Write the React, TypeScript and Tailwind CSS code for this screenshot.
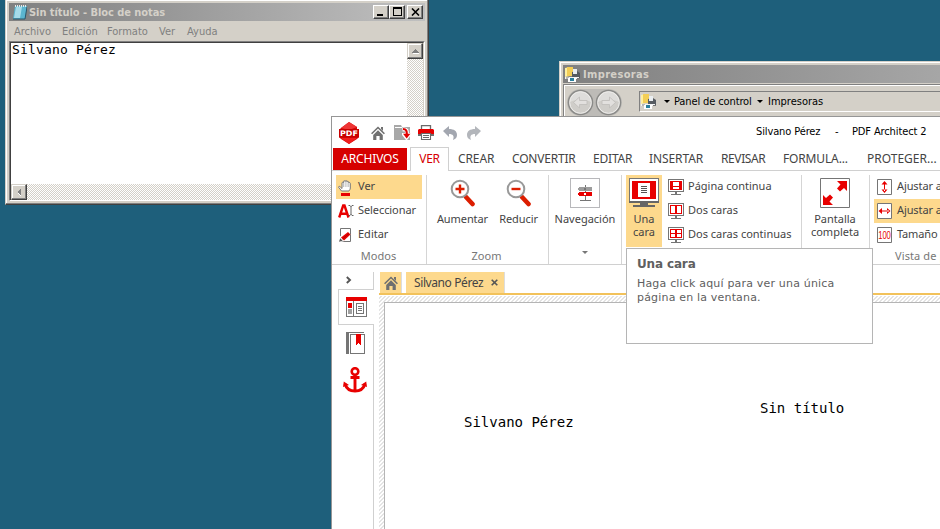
import type { ReactNode } from "react";

const RED = "#e80000";
const GREY = "#757575";

function Svg({ w, h, children, crisp = false, className = "" }: { w: number; h: number; children: ReactNode; crisp?: boolean; className?: string }) {
  return (
    <svg width={w} height={h} viewBox={`0 0 ${w} ${h}`} fill="none" shapeRendering={crisp ? "crispEdges" : "auto"} className={`block shrink-0 ${className}`}>
      {children}
    </svg>
  );
}

function NotepadIcon() {
  return (
    <Svg w={15} h={16}>
      <path d="M3 2h12l-2 13H1z" fill="#5bb5cf" />
      <path d="M4 3h6L8 14H2z" fill="#a5dbe9" />
      <path d="M3 2h12" stroke="#e8e8e8" strokeWidth="2" strokeDasharray="1 1" />
      <path d="M1 15h12l2-12" stroke="#28566b" />
    </Svg>
  );
}

function PrinterFolderIcon() {
  return (
    <Svg w={17} h={17}>
      <path d="M1 2l5-1v9l-5 1z" fill="#fff0a0" />
      <path d="M3 1h6v9H3z" fill="#f3ce56" />
      <path d="M8 6l5-1 3 2v5H8z" fill="#565b61" />
      <path d="M9 3h4v5H9z" fill="#e9edf0" />
      <path d="M1 11h14v2H1z" fill="#f5f5f5" />
      <path d="M2 12h3M13 12.500h3" stroke="#777" />
      <path d="M4 12h8v4H4z" fill="#fff" />
      <path d="M6 12h4v3H6z" fill="#2b7f9c" />
    </Svg>
  );
}

function HomeIcon() {
  return (
    <Svg w={14} h={14}>
      <path d="M.6 7.800L7 1.500l6.400 6.300" stroke="#707070" strokeWidth="1.600" />
      <path d="M10 1h2v4l-2-2z" fill="#707070" />
      <path d="M2.200 9L7 4.300 11.800 9v5H8.600v-4H5.400v4H2.200z" fill="#707070" />
    </Svg>
  );
}

function PdfLogo() {
  return (
    <Svg w={20} h={22}>
      <path d="M10 0l8 5v3h2v7l-2 2-8 5-8-5-2-2V8l2-2z" fill="#d60808" />
      <path d="M10 0l8 5-8 3-8-2z" fill="#ee3535" />
      <path d="M0 7h20v8.500H0z" fill="#c90000" />
      <path d="M2 16l8 6 8-6z" fill="#f01c1c" />
      <text x="10" y="14" fill="#fff" fontSize="7.500" fontWeight="700" textAnchor="middle" fontFamily="DejaVu Sans" textLength="18" lengthAdjust="spacingAndGlyphs">PDF</text>
    </Svg>
  );
}

function FolderArrowIcon() {
  return (
    <Svg w={17} h={15}>
      <path d="M0 0h7l1 2h8v13H0z" fill="#a8a8a8" />
      <path d="M1 2.500h7" stroke="#fff" />
      <path d="M8.500 4.500c4.500-.5 4.500 1 4.500 5" stroke="#fff" strokeWidth="4" />
      <path d="M8 8h9v2l-4 5h-1L8 10z" fill="#fff" />
      <path d="M9 4c3.500 0 3.800 2 3.800 5.500" stroke="#e00000" strokeWidth="2.200" />
      <path d="M9 8.800h7.400l-3.700 4.700z" fill="#e00000" />
    </Svg>
  );
}

function PrintIcon() {
  return (
    <Svg w={16} h={15}>
      <path d="M3.500 5V.6h9V5" stroke="#6a6a6a" strokeWidth="1.300" />
      <path d="M1 4h14l1 1v4H0V5z" fill={RED} />
      <path d="M0 9h16v2H0z" fill="#707070" />
      <path d="M3.500 8.500h9v6h-9z" fill="#fff" stroke="#6a6a6a" strokeWidth="1.100" />
      <path d="M5 10.500h6M5 12.500h6" stroke="#6a6a6a" />
    </Svg>
  );
}

function UndoIcon({ flip = false }: { flip?: boolean }) {
  return (
    <Svg w={14} h={14} className={flip ? "-scale-x-100" : ""}>
      <path d="M0 5L6 0v3c5 0 8 2 8 6 0 2-1 4-4 5 1.500-4 0-6-4-6v3z" fill={flip ? "#b3b6bb" : "#a3a7b0"} />
    </Svg>
  );
}

function HandIcon() {
  return (
    <Svg w={16} h={17}>
      <path d="M3.500 12L.6 8.200c0-1.100 1.200-1.100 2 0L4 9.500V4c0-1 1.500-1 1.500 0V2.500c0-1 1.700-1 1.700 0v-.2c0-1 1.700-1 1.700 0V3c0-1 1.800-1 1.800.2V4c.3-.8 1.600-.5 1.600.4V9c0 1.500-.8 2-1.300 3z" fill="#fff" stroke="#777" />
      <path d="M5.500 3v5M7.200 2.500v5.500M9 3v5M10.700 4v4" stroke="#999" strokeWidth=".6" />
      <path d="M3 14h9v3H3z" fill={RED} shapeRendering="crispEdges" />
    </Svg>
  );
}

function SelectIcon() {
  return (
    <Svg w={16} h={14}>
      <path d="M1.200 13.500L5.200 1.500h1.300l4 12M3 9.800h6" stroke={RED} strokeWidth="2.400" />
      <path d="M10.500 1.500H12l1 1 1-1h1.500M13 2v9M10.500 11.500H12l1-1 1 1h1.500" stroke="#555" strokeWidth=".9" />
    </Svg>
  );
}

function EditIcon() {
  return (
    <Svg w={14} h={16}>
      <path d="M2.500 1.500h10v13h-10z" fill="#fff" stroke={GREY} />
      <path d="M.5 15.500l1.500-6 6.500-5.500 4 3.500-6 6.500z" fill="#fff" />
      <path d="M3 10.500L10 5l2.500 2.500-6.500 6z" fill={RED} />
      <path d="M4.500 12l6.500-5.500" stroke="#a00000" strokeWidth=".7" />
      <path d="M1 14.800l1.200-3.500 2.500 2.500z" fill="#555" />
    </Svg>
  );
}

function MagnifierIcon({ plus = false }: { plus?: boolean }) {
  return (
    <Svg w={26} h={28}>
      <path d="M16 18l6.500 7" stroke="#dc1e00" strokeWidth="4.600" strokeLinecap="round" />
      <circle cx="10" cy="10" r="8.300" stroke="#999" strokeWidth="2" fill="#fff" />
      <path d={plus ? "M5.500 10h9M10 5.500v9" : "M5.500 10h9"} stroke="#dc1e00" strokeWidth="2.400" />
    </Svg>
  );
}

function SignpostIcon() {
  return (
    <Svg w={30} h={30} crisp>
      <path d="M.5.5h29v29H.5z" fill="#fff" stroke="#b8b8bb" />
      <path d="M9 9h13v4H9l-1-2z" fill="#9c9c9c" />
      <path d="M9 14h13v4H9l-1-2z" fill={RED} />
      <path d="M15 7h1v2h-1zM14 10h2v2h-2zM15 13h1v1h-1zM15 18h1v4h-1zM10 22h11v1H10z" fill={GREY} />
      <path d="M14 15h2v2h-2z" fill="#fff" />
    </Svg>
  );
}

function MonitorIcon() {
  return (
    <Svg w={30} h={30} crisp>
      <path d="M0 0h30v25H0z" fill={GREY} />
      <path d="M1 1h28v22H1z" fill="#fff" />
      <path d="M3 3h24v18H3z" fill={RED} />
      <path d="M9 5h12v14H9z" fill="#fff" />
      <path d="M0 23h30v2H0zM11 25h8v2h-8zM4 27h22v2H4z" fill="#666" />
      <path d="M12 8.500h6M12 10.500h6M12 12.500h6M12 14.500h6" stroke="#555" />
    </Svg>
  );
}

function SmallMonitor({ kind }: { kind: "single" | "double" | "grid" }) {
  return (
    <Svg w={16} h={16} crisp>
      <path d="M0 0h16v13H0z" fill={GREY} />
      <path d="M1 1h14v11H1z" fill="#fff" />
      <path d="M2 2h12v9H2z" fill={RED} />
      {kind === "single" && <path d="M5 3h6v4H5zM5 8h6v2H5z" fill="#fff" />}
      {kind === "double" && <path d="M3 3h4v7H3zM9 3h4v7H9z" fill="#fff" />}
      {kind === "grid" && <path d="M3 3h4v3H3zM9 3h4v3H9zM3 7h4v3H3zM9 7h4v3H9z" fill="#fff" />}
      <path d="M7 13h2v2H7zM3 15h10v1H3z" fill={GREY} />
    </Svg>
  );
}

function FullscreenIcon() {
  return (
    <Svg w={30} h={30}>
      <path d="M.5.5h29v29H.5z" fill="#fff" stroke={GREY} />
      <path d="M17 3h10v10l-3-3-4 3.500-3-3 3.500-4zM3 17l3 3 4-3.500 3 3L9.500 23.500 13 27H3z" fill={RED} />
    </Svg>
  );
}

function FitIcon({ kind }: { kind: "v" | "h" | "100" }) {
  return (
    <Svg w={15} h={16}>
      <path d="M.5.5h14v15H.5z" fill="#fff" stroke={GREY} />
      {kind === "v" && <path d="M7 4h1v8H7zM7.500 2l3 3.500h-6zM7.500 14l3-3.500h-6z" fill={RED} />}
      {kind === "h" && <path d="M3 7.500h9v1H3zM1.500 8l3.500-3v6zM13.500 8L10 5v6z" fill={RED} />}
      {kind === "100" && <text x="7.500" y="12" fill={RED} fontSize="11" textAnchor="middle" fontFamily="Liberation Sans" textLength="12.500" lengthAdjust="spacingAndGlyphs">100</text>}
    </Svg>
  );
}

function CaptionButton({ children }: { children: ReactNode }) {
  return (
    <div className="flex h-[14px] w-4 items-center justify-center border border-t-white border-l-white border-r-[#404040] border-b-[#404040] bg-[#d4d0c8] shadow-[inset_-1px_-1px_0_#808080]">
      {children}
    </div>
  );
}

function ScrollButton({ up = false }: { up?: boolean }) {
  return (
    <div className="flex size-4 items-center justify-center border border-t-[#d4d0c8] border-l-[#d4d0c8] border-r-[#404040] border-b-[#404040] bg-[#d4d0c8] shadow-[inset_-1px_-1px_0_#808080,inset_1px_1px_0_#fff]">
      <Svg w={8} h={8} crisp>
        <path d={up ? "M1 7h7L5 3z" : "M6 1v7L2 5z"} fill="#fff" />
        <path d={up ? "M0 6h8L4 2z" : "M6 0v8L2 4z"} fill="#808080" />
      </Svg>
    </div>
  );
}

const DITHER = "bg-[repeating-conic-gradient(#ffffff_0_25%,#d4d0c8_0_50%)] bg-[length:2px_2px]";

function Notepad() {
  return (
    <section className="absolute left-[5px] top-0 flex h-[205px] w-[424px] flex-col border-r border-b border-l border-l-[#d4d0c8] border-r-[#404040] border-b-[#404040] bg-[#d4d0c8] px-[3px] pt-[3px] pb-[3px] font-['DejaVu_Sans_Condensed'] shadow-[inset_-1px_-1px_0_#808080,inset_1px_1px_0_#fff]">
      <header className="flex h-[18px] shrink-0 items-center bg-linear-to-r from-[#808080] to-[#c0c0c0] pr-[2px] pl-[3px]">
        <NotepadIcon />
        <h1 className="ml-[2px] grow pt-px text-[11px] leading-[16px] font-bold tracking-[-0.05px] whitespace-nowrap text-[#d4d0c8]">Sin título - Bloc de notas</h1>
        <CaptionButton><span className="mt-[6px] mr-[3px] h-[2px] w-[6px] bg-black" /></CaptionButton>
        <CaptionButton><span className="mb-px size-[9px] border border-t-2 border-black" /></CaptionButton>
        <div className="w-[2px]" />
        <CaptionButton>
          <Svg w={9} h={8}><path d="M1 .5l7 7M8 .5l-7 7" stroke="#000" strokeWidth="1.600" /></Svg>
        </CaptionButton>
      </header>
      <nav className="flex h-5 shrink-0 items-center pt-px pl-[5px] text-[11px] leading-[20px] whitespace-nowrap text-[#808080]">
        <span className="w-[48px]">Archivo</span>
        <span className="w-[45px]">Edición</span>
        <span className="w-[52px]">Formato</span>
        <span className="w-[28px]">Ver</span>
        <span>Ayuda</span>
      </nav>
      <div className="flex min-h-0 grow border-t border-r border-b border-l border-[#808080] border-r-white border-b-white">
        <div className="flex grow border border-t-[#404040] border-r-[#d4d0c8] border-b-0 border-l-[#404040] bg-white">
          <div className="flex grow flex-col">
            <p className="grow pl-px font-['DejaVu_Sans_Mono'] text-[13px] leading-[14px] tracking-[0.17px] text-black">Silvano Pérez</p>
            <div className={`flex h-4 shrink-0 ${DITHER}`}><ScrollButton /></div>
          </div>
          <div className={`w-4 ${DITHER}`}><ScrollButton up /></div>
        </div>
      </div>
    </section>
  );
}

function NavCircle({ flip = false }: { flip?: boolean }) {
  return (
    <Svg w={27} h={27} className={flip ? "-scale-x-100" : ""}>
      <circle cx="13.500" cy="13.500" r="12" fill="#cfcdc9" stroke="#8a8a88" strokeWidth="1.500" />
      <path d="M3 13a10.500 10.500 0 0 1 21 0c-6-3-15-3-21 0z" fill="#dedddb" />
      <circle cx="13.500" cy="13.500" r="10.800" stroke="#efeeec" />
      <path d="M6.500 13.500l6-5.500v3.500h7.500v4h-7.500V19z" fill="#e2e0de" stroke="#bfbdba" strokeWidth=".8" />
    </Svg>
  );
}

function Printers() {
  return (
    <section className="absolute top-[61px] left-[559px] h-[120px] w-[400px] border-t border-l border-[#d4d0c8] bg-[#d4d0c8] pt-[3px] pl-[3px] font-['DejaVu_Sans_Condensed'] shadow-[inset_1px_1px_0_#fff]">
      <header className="flex h-[18px] items-center bg-linear-to-r from-[#808080] to-[#a8a8a8] pl-px">
        <PrinterFolderIcon />
        <h2 className="ml-[2px] pt-px text-[11px] leading-[16px] font-bold tracking-[0.35px] text-[#d4d0c8]">Impresoras</h2>
      </header>
      <div className="mt-[1px] flex h-20 items-start border-t border-l border-[#808080] pt-[4px] pl-[3px] shadow-[inset_1px_1px_0_#fff]">
        <div className="flex w-[72px]">
          <div className="flex gap-px rounded-full bg-[#bdbbb7]">
            <NavCircle />
            <NavCircle flip />
          </div>
        </div>
        <div className="mt-[2px] flex h-[21px] grow items-center border-t border-b border-l border-t-[#808080] border-b-white border-l-[#808080] text-[11px] text-black">
          <PrinterFolderIcon />
          <span className="ml-[7px] border-x-3 border-t-3 border-x-transparent border-t-black" />
          <span className="ml-[4px] w-[83px] pt-px tracking-[-0.12px] whitespace-nowrap">Panel de control</span>
          <span className="border-x-3 border-t-3 border-x-transparent border-t-black" />
          <span className="ml-[5px] pt-px">Impresoras</span>
        </div>
      </div>
    </section>
  );
}

function SmallButton({ icon, label, className = "" }: { icon: ReactNode; label: string; className?: string }) {
  return (
    <div className={`flex h-6 shrink-0 items-center whitespace-nowrap ${className}`}>
      <span className="w-[20px] shrink-0">{icon}</span>
      <span className="pb-[2px] leading-[20px]">{label}</span>
    </div>
  );
}

function BigButton({ icon, lines, className = "" }: { icon: ReactNode; lines: string[]; className?: string }) {
  return (
    <div className={`flex flex-col items-center pt-[3px] text-center leading-[13px] whitespace-nowrap ${className}`}>
      <span className="mb-[4px] flex h-[30px] items-center">{icon}</span>
      {lines.map((l) => <span key={l}>{l}</span>)}
    </div>
  );
}

function Ribbon() {
  return (
    <div className="flex h-[94px] shrink-0 border-b border-[#d0d0d0] pt-1 text-[11px] text-[#444]">
      <div className="flex w-[95px] shrink-0 flex-col border-r border-[#d5d5d5] pl-1">
        <SmallButton className="w-[86px] bg-[#fdd98d] pl-[2px]" icon={<HandIcon />} label="Ver" />
        <SmallButton className="pl-[2px] tracking-[-0.08px]" icon={<SelectIcon />} label="Seleccionar" />
        <SmallButton className="pl-[2px]" icon={<EditIcon />} label="Editar" />
        <span className="w-[85px] shrink-0 text-center leading-[17px] text-[#777]">Modos</span>
      </div>
      <div className="flex w-[122px] shrink-0 flex-col border-r border-[#d5d5d5]">
        <div className="flex h-[72px] shrink-0 tracking-[-0.08px]">
          <BigButton className="w-[71px]" icon={<MagnifierIcon plus />} lines={["Aumentar"]} />
          <BigButton className="w-[41px]" icon={<MagnifierIcon />} lines={["Reducir"]} />
        </div>
        <span className="shrink-0 pr-[2px] text-center leading-[17px] text-[#777]">Zoom</span>
      </div>
      <div className="flex w-[73px] shrink-0 flex-col items-center border-r border-[#d5d5d5]">
        <BigButton className="h-[76px]" icon={<SignpostIcon />} lines={["Navegación"]} />
        <span className="border-x-3 border-t-3 border-x-transparent border-t-[#777]" />
      </div>
      <div className="flex w-[180px] shrink-0 border-r border-[#d5d5d5] pl-1">
        <BigButton className="h-[72px] w-9 bg-[#fdd98d]" icon={<MonitorIcon />} lines={["Una", "cara"]} />
        <div className="pl-[6px]">
          <SmallButton icon={<SmallMonitor kind="single" />} label="Página continua" />
          <SmallButton icon={<SmallMonitor kind="double" />} label="Dos caras" />
          <SmallButton icon={<SmallMonitor kind="grid" />} label="Dos caras continuas" />
        </div>
      </div>
      <div className="flex w-[68px] shrink-0 justify-center border-r border-[#d5d5d5] pr-px">
        <BigButton icon={<FullscreenIcon />} lines={["Pantalla", "completa"]} />
      </div>
      <div className="flex w-[200px] shrink-0 flex-col pl-1">
        <SmallButton className="pl-[3px] tracking-[-0.1px]" icon={<FitIcon kind="v" />} label="Ajustar a página" />
        <SmallButton className="bg-[#fdd98d] pl-[3px] tracking-[-0.1px]" icon={<FitIcon kind="h" />} label="Ajustar a ancho" />
        <SmallButton className="pl-[3px] tracking-[-0.15px]" icon={<FitIcon kind="100" />} label="Tamaño actual" />
        <span className="shrink-0 pl-[21px] leading-[17px] tracking-[0.1px] text-[#777]">Vista de página</span>
      </div>
    </div>
  );
}

function Sidebar() {
  return (
    <aside className="flex w-[42px] shrink-0 flex-col pt-[7px] pl-[6px]">
      <div className="flex h-[17px] items-center border-r border-[#d0d0d0] pb-[2px] pl-[8px]">
        <Svg w={6} h={8}><path d="M.8 1L4 4 .8 7" stroke="#555" strokeWidth="1.900" /></Svg>
      </div>
      <div className="flex h-9 items-center border-y border-l border-[#d0d0d0] pl-[7px]">
        <Svg w={21} h={20} crisp>
          <path d="M.5 1.500h20v18H.5z" fill="#fff" stroke={GREY} />
          <path d="M0 0h21v4H0z" fill={RED} />
          <path d="M7 4h1v15H7z" fill={GREY} />
          <path d="M2 6h4v5H2z" fill={RED} />
          <path d="M2 12h4v5H2z" fill="#a0a0a0" />
          <path d="M10.500 6.500h7v10h-7zM12 9.500h4M12 11.500h4M12 13.500h4" stroke={GREY} />
        </Svg>
      </div>
      <div className="grow border-r border-[#d0d0d0] pl-2">
        <Svg w={20} h={22} crisp className="mt-[7px]">
          <path d="M0 0h18v1H3v21H0z" fill={GREY} />
          <path d="M4.500 2.500h14v19h-14z" fill="#fff" stroke={GREY} />
          <path d="M10 2h5v11l-2.500-2-2.500 2z" fill={RED} />
        </Svg>
        <Svg w={24} h={26} className="mt-[13px] -ml-[3px]">
          <circle cx="12" cy="4.500" r="3.300" stroke={RED} strokeWidth="2.600" />
          <path d="M12 8v16M7.500 10.500h9" stroke={RED} strokeWidth="2.900" />
          <path d="M2 17c1.500 5 5.500 7 10 7s8.500-2 10-7" stroke={RED} strokeWidth="2.800" />
          <path d="M0 20l.8-5.500L6 18zM24 20l-.8-5.500L18 18z" fill={RED} />
        </Svg>
      </div>
    </aside>
  );
}

function PdfArchitect() {
  return (
    <section className="absolute top-[116px] left-[331px] flex h-[413px] w-[609px] flex-col overflow-hidden border-t border-l border-[#969696] bg-white font-['Noto_Sans']">
      <header className="flex h-[30px] shrink-0 items-center pt-px pl-[7px]">
        <span className="w-[32px]"><PdfLogo /></span>
        <span className="w-[23px]"><HomeIcon /></span>
        <span className="w-[24px]"><FolderArrowIcon /></span>
        <span className="w-[25px]"><PrintIcon /></span>
        <span className="w-[24px]"><UndoIcon /></span>
        <span className="w-[289px]"><UndoIcon flip /></span>
        <div className="flex pb-px font-['DejaVu_Sans_Condensed'] text-[11px] whitespace-nowrap text-black">
          <span className="w-[79px] tracking-[-0.12px]">Silvano Pérez</span>
          <span className="w-[17px]">-</span>
          <span className="tracking-[-0.12px]">PDF Architect 2</span>
        </div>
      </header>
      <nav className="flex h-6 shrink-0 border-b border-[#d0d0d0] pl-px text-[12px] leading-[23px] whitespace-nowrap text-[#444]">
        <span className="mt-px mr-[3px] h-[22px] w-[74px] shrink-0 bg-[#d60000] text-center leading-[22px] tracking-[-0.15px] text-white">ARCHIVOS</span>
        <span className="-mb-px w-[39px] shrink-0 border border-b-0 border-[#d0d0d0] bg-white text-center leading-[22px] tracking-[-0.2px] text-[#d60000]">VER</span>
        <span className="ml-[9px] w-[54px] shrink-0 tracking-[-0.1px]">CREAR</span>
        <span className="w-[81px] shrink-0 tracking-[-0.2px]">CONVERTIR</span>
        <span className="w-[56px] shrink-0 tracking-[-0.2px]">EDITAR</span>
        <span className="w-[72px] shrink-0 tracking-[-0.1px]">INSERTAR</span>
        <span className="w-[62px] shrink-0 tracking-[-0.4px]">REVISAR</span>
        <span className="w-[84px] shrink-0 tracking-[-0.15px]">FORMULA...</span>
        <span className="shrink-0">PROTEGER...</span>
      </nav>
      <Ribbon />
      <div className="flex min-h-0 grow">
        <Sidebar />
        <main className="flex grow flex-col pt-[7px] pl-[5px]">
          <div className="flex h-[23px] shrink-0 gap-[4px] border-b-2 border-[#f2c25b] pl-px text-[12px] text-[#444]">
            <span className="flex h-[21px] w-[22px] items-center justify-center border-r border-[#ddd] bg-[#fdd98d]"><HomeIcon /></span>
            <span className="flex h-[21px] w-[99px] items-center border-r border-[#ddd] bg-[#fdd98d] pl-2">
              <span className="w-[77px] tracking-[-0.4px] whitespace-nowrap">Silvano Pérez</span>
              <Svg w={7} h={7}><path d="M.7.7l5.600 5.600M6.300.7L.7 6.300" stroke="#555" strokeWidth="1.600" /></Svg>
            </span>
          </div>
          <div className="mt-px grow bg-[repeating-linear-gradient(135deg,#fff_0_1.414px,#e4e4e4_1.414px_2.828px)] pt-[6px] pl-[5px]">
            <div className="flex h-full border-t border-l border-[#b5b5b5] bg-white font-['DejaVu_Sans_Mono'] text-[14px] leading-[16px] whitespace-nowrap text-black">
              <p className="mt-[111px] ml-[79px] w-[296px]">Silvano Pérez</p>
              <p className="mt-[97px]">Sin título</p>
            </div>
          </div>
        </main>
      </div>
    </section>
  );
}

export default function App() {
  return (
    <div className="relative h-[529px] w-[940px] overflow-hidden bg-[#1e5f7b]">
      <Notepad />
      <Printers />
      <PdfArchitect />
      <div className="absolute top-[248px] left-[626px] h-24 w-[247px] border border-[#b5b5b5] bg-white px-[10px] pt-[7px] font-['DejaVu_Sans'] text-[11px] leading-[14px] whitespace-nowrap text-[#606060]">
        <h3 className="mb-[5px] text-[12px] leading-[16px] font-bold tracking-[-0.15px]">Una cara</h3>
        <p className="tracking-[0.18px]">Haga click aquí para ver una única</p>
        <p className="tracking-[0.18px]">página en la ventana.</p>
      </div>
    </div>
  );
}
